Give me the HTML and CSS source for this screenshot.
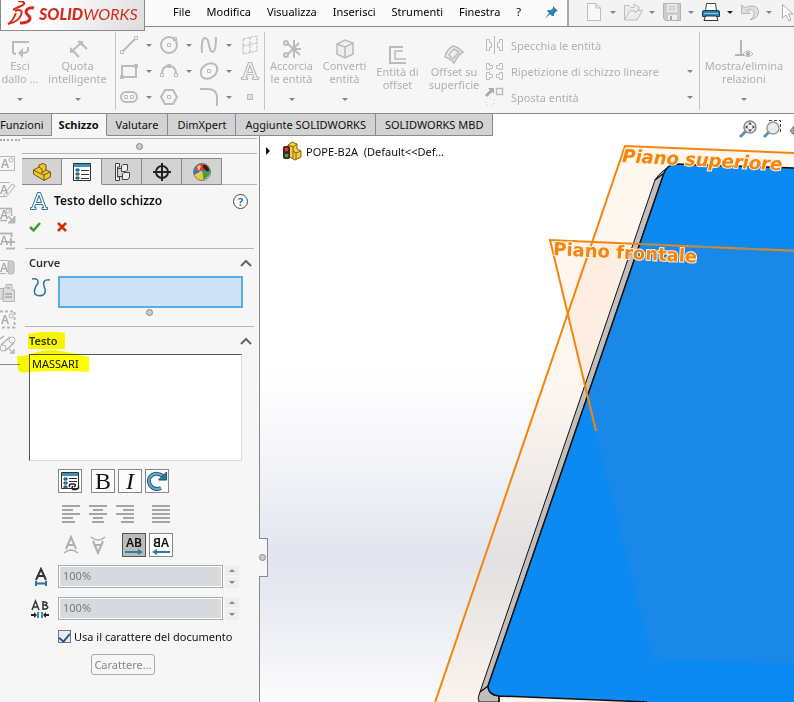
FILE: index.html
```html
<!DOCTYPE html>
<html lang="it">
<head>
    <meta charset="UTF-8">
    <meta name="viewport" content="width=device-width, initial-scale=1.0">
    <title>SOLIDWORKS - POPE-B2A</title>
    <link rel="stylesheet" href="styles.css">
</head>
<body>

    <!-- Menu bar -->
    <header class="menubar">
        <div class="logo">
            <svg width="28" height="26" viewBox="0 0 28 26" fill="none" stroke="#d42b1e">
                <path d="M11 0C15 0 18 1 17 3C16 5 10 6 6 9" stroke-width="2"/>
                <path d="M8 10C13 8 16 9 14 14C12 19 6 22 1 23C5 21 7 17 9 12" stroke-width="2"/>
                <path d="M27 7C23 6 19 8 19 11C19 14 24 15 23 18C22 21 17 22 13 22" stroke-width="3"/>
            </svg>
            <span><b>SOLID</b>WORKS</span>
        </div>
        <nav class="menus">
            <button>File</button>
            <button>Modifica</button>
            <button>Visualizza</button>
            <button>Inserisci</button>
            <button>Strumenti</button>
            <button>Finestra</button>
            <button>?</button>
            <button class="pin" aria-label="Blocca menu">
                <svg width="14" height="14" viewBox="0 0 14 14"><path d="M8 1L13 6L11 6.500L9 9L9 11L7 11L5 9L1 13L0.500 13L4 8L2 6L3 5L6 5L8 3Z" fill="#2b83b0"/></svg>
            </button>
        </nav>
        <div class="quickbar">
            <button class="quick" aria-label="Nuovo">
                <svg width="20" height="20" viewBox="0 0 20 20"><path d="M3.500 1.500H12L16.500 6V18.500H3.500ZM12 1.500V6H16.500" fill="#f8f8f8" stroke="#bdbdbd"/></svg>
                <i class="caret"></i>
            </button>
            <button class="quick" aria-label="Apri">
                <svg width="20" height="20" viewBox="0 0 20 20"><path d="M1.500 18V3.500H6L8 5.500H11V2L17 6L12 11V9H7L1.500 18H14L19.500 8.500H15" fill="#ececec" stroke="#bdbdbd"/></svg>
                <i class="caret"></i>
            </button>
            <button class="quick" aria-label="Salva">
                <svg width="20" height="20" viewBox="0 0 20 20"><path d="M1.500 1.500H18.500V18.500H3.500L1.500 16.500Z" fill="#ccc" stroke="#b2b2b2"/><path d="M5 2H15V10H5Z" fill="#f4f4f4"/><path d="M6 4H14M6 6H14M6 8H14" stroke="#bbb"/><path d="M6 13H15V18H6Z" fill="#eee"/><path d="M8 14H10V18H8Z" fill="#aaa"/></svg>
                <i class="caret"></i>
            </button>
            <button class="quick on" aria-label="Stampa">
                <svg width="20" height="20" viewBox="0 0 20 20"><path d="M5.500 1.500H14.500L15.500 9H4.500Z" fill="#fff" stroke="#444"/><path d="M1.500 10Q1.500 8.500 3 8.500H17Q18.500 8.500 18.500 10V14.500H1.500Z" fill="#2b83b0" stroke="#153f56"/><path d="M3 11.500H17" stroke="#8cc8e2"/><path d="M4.500 14H15.500L17 18.500H3Z" fill="#fff" stroke="#333"/></svg>
                <i class="caret"></i>
            </button>
            <button class="quick" aria-label="Annulla">
                <svg width="20" height="20" viewBox="0 0 20 20"><path d="M1.500 3V11.500H10L7 8.500Q14 6 14 12Q14 15 10 18Q19 16 18.500 9Q17 1 4.500 5.500Z" fill="#dedede" stroke="#b8b8b8"/></svg>
                <i class="caret"></i>
            </button>
            <button class="quick" aria-label="Seleziona">
                <svg width="20" height="20" viewBox="0 0 20 20"><path d="M3.500 2.500V16L7 13L10 19L12 18L9.500 12H14Z" fill="#fff" stroke="#aaa"/></svg>
            </button>
        </div>
    </header>

    <!-- Sketch ribbon -->
    <section class="ribbon">
        <div class="group line">
            <button class="cmd narrow">
                <svg width="20" height="20" viewBox="0 0 20 20" fill="none" stroke="#bbb" stroke-width="2"><path d="M19 3H3V13Q3 15 6 15"/><path d="M18 8V11Q18 14 12 14"/><path d="M13 9L8 14L13 19Z" fill="#bbb" stroke="none"/></svg>
                <span>Esci<br>dallo ...</span>
                <i class="caret"></i>
            </button>
            <button class="cmd wide">
                <svg width="20" height="20" viewBox="0 0 20 20" fill="none" stroke="#bbb" stroke-width="2"><path d="M11 18L3 10M19 10L11 2M4 12L13 4"/><path d="M2 14V8L8 13ZM9 2H15V8Z" fill="#bbb" stroke="none"/></svg>
                <span>Quota<br>intelligente</span>
                <i class="caret"></i>
            </button>
        </div>

        <div class="sketch-tools">
            <button aria-label="Linea"><svg width="20" height="20" viewBox="0 0 20 20"><path d="M4 16L16 4" stroke-width="2"/><path d="M1.500 15.500h3v3h-3zM15.500 1.500h3v3h-3z"/></svg><i class="caret"></i></button>
            <button aria-label="Cerchio"><svg width="20" height="20" viewBox="0 0 20 20"><circle cx="10" cy="10" r="8" stroke-width="2"/><path d="M8.500 8.500h3v3h-3zM14.500 2.500h3v3h-3z"/></svg><i class="caret"></i></button>
            <button aria-label="Spline"><svg width="20" height="20" viewBox="0 0 20 20"><path d="M3 18Q2 3 6 3Q9 3 10 10Q11 17 14 17Q17 16 17 2" stroke-width="2"/></svg><i class="caret"></i></button>
            <button aria-label="Piano"><svg width="20" height="20" viewBox="0 0 20 20"><path d="M3 4L17 1V16L3 19ZM10 2V18M3 11L17 8" stroke-dasharray="3 1"/></svg></button>
            <button aria-label="Rettangolo"><svg width="20" height="20" viewBox="0 0 20 20"><path d="M3 5H17V16H3Z" stroke-width="2"/><path d="M1.500 14.500h3v3h-3zM15.500 3.500h3v3h-3z"/></svg><i class="caret"></i></button>
            <button aria-label="Arco"><svg width="20" height="20" viewBox="0 0 20 20"><path d="M3 13Q3 5 10 5Q17 5 17 13" stroke-width="2"/><path d="M1.500 12.500h3v3h-3zM15.500 12.500h3v3h-3zM8.500 3.500h3v3h-3z"/></svg><i class="caret"></i></button>
            <button aria-label="Ellisse"><svg width="20" height="20" viewBox="0 0 20 20"><ellipse cx="10" cy="10" rx="9" ry="7" transform="rotate(-38 10 10)" stroke-width="2"/><path d="M8.500 8.500h3v3h-3z"/></svg><i class="caret"></i></button>
            <button aria-label="Testo"><svg width="20" height="20" viewBox="0 0 20 20"><path d="M1.500 18.500V16.500H3L8.500 1.500H11.500L17 16.500H18.500V18.500H12.500V16.500H14L13 13.500H7L6 16.500H7.500V18.500ZM7.500 11.500L10 4.500L12.500 11.500Z" stroke-width="1.200"/></svg></button>
            <button aria-label="Asola"><svg width="20" height="20" viewBox="0 0 20 20"><rect x="2" y="5" width="16" height="10" rx="5" stroke-width="2"/><path d="M5.500 8.500h3v3h-3zM11.500 8.500h3v3h-3z"/></svg><i class="caret"></i></button>
            <button aria-label="Poligono"><svg width="20" height="20" viewBox="0 0 20 20"><path d="M6 3H14L18 10L14 17H6L2 10Z" stroke-width="2"/><path d="M8.500 8.500h3v3h-3z"/></svg></button>
            <button aria-label="Raccordo"><svg width="20" height="20" viewBox="0 0 20 20"><path d="M1 2H9Q18 2 18 11V19" stroke-width="2"/></svg><i class="caret"></i></button>
            <button aria-label="Punto"><svg width="20" height="20" viewBox="0 0 20 20"><path d="M7.500 7.500h5v5h-5z" fill="#ddd"/></svg></button>
        </div>

        <div class="group">
            <button class="cmd">
                <svg width="20" height="20" viewBox="0 0 20 20" fill="none" stroke="#bbb" stroke-width="2"><circle cx="4" cy="4" r="2"/><circle cx="4" cy="16" r="2"/><path d="M6 5L18 16M6 15L17 4M12 1V19M9 10H19"/></svg>
                <span>Accorcia<br>le entità</span>
                <i class="caret"></i>
            </button>
            <button class="cmd">
                <svg width="20" height="20" viewBox="0 0 20 20" fill="#eee" stroke="#bbb" stroke-width="1.500"><path d="M2 5L10 1L18 4V15L10 19L2 15ZM2 5L10 8L18 4M10 8V19"/></svg>
                <span>Converti<br>entità</span>
                <i class="caret"></i>
            </button>
            <button class="cmd low">
                <svg width="20" height="20" viewBox="0 0 20 20" fill="none" stroke="#bbb"><path d="M15 2H2V18H18" stroke-width="2"/><path d="M15 6H7V14H18" stroke-width="1.500"/></svg>
                <span>Entità di<br>offset</span>
            </button>
            <button class="cmd offset low">
                <svg width="20" height="20" viewBox="0 0 20 20" fill="#eee" stroke="#bbb" stroke-width="1.500"><path d="M1 12Q3 4 9 1Q14 2 19 7Q14 10 10 18Q6 13 1 12Z"/><path d="M5 10Q7 6 10 4L15 7L9 14Z"/></svg>
                <span>Offset su<br>superficie</span>
            </button>
        </div>

        <div class="entity-list">
            <button><svg width="20" height="20" viewBox="0 0 20 20"><path d="M10.500 1V19M2.500 4.500H5.500V7.500H7.500V12.500H5.500V15.500H2.500ZM18.500 4.500H15.500V7.500H13.500V12.500H15.500V15.500H18.500Z"/></svg><span>Specchia le entità</span></button>
            <button><svg width="20" height="20" viewBox="0 0 20 20"><path d="M2.500 2.500H5.500V4.500H8.500V7.500H5.500V8.500H2.500ZM18.500 2.500H15.500V4.500H12.500V7.500H15.500V8.500H18.500ZM2.500 11.500H5.500V13.500H8.500V16.500H5.500V18.500H2.500ZM18.500 11.500H15.500V13.500H12.500V16.500H15.500V18.500H18.500Z"/></svg><span>Ripetizione di schizzo lineare</span><i class="caret"></i></button>
            <button><svg width="20" height="20" viewBox="0 0 20 20"><path d="M2 9L8 3" stroke="#aaa" stroke-width="3"/><path d="M4 1H10V7Z" fill="#aaa" stroke="none"/><path d="M12.500 1.500h6v6h-6z" stroke-width="1.500"/><path d="M2 12h8v6H2z" stroke-dasharray="1 3" stroke="#ccc"/></svg><span>Sposta entità</span><i class="caret"></i></button>
        </div>

        <div class="group">
            <button class="cmd relations">
                <svg width="20" height="20" viewBox="0 0 20 20" fill="none" stroke="#b5b5b5" stroke-width="2"><path d="M7 1V15M1 16H10"/><path d="M9 15Q14 9 19 15Q14 20 9 15Z" stroke-width="1"/><circle cx="14" cy="15" r="2" fill="#aaa" stroke="none"/></svg>
                <span>Mostra/elimina<br>relazioni</span>
                <i class="caret"></i>
            </button>
        </div>
    </section>

    <!-- Command tabs -->
    <div class="tabrow">
        <nav class="tabs">
            <button>Funzioni</button>
            <button class="active">Schizzo</button>
            <button>Valutare</button>
            <button>DimXpert</button>
            <button>Aggiunte SOLIDWORKS</button>
            <button>SOLIDWORKS MBD</button>
        </nav>
        <div class="headsup">
            <svg width="18" height="20" viewBox="0 0 18 20"><path d="M1 18L7 12" stroke="#5b93b5" stroke-width="3"/><circle cx="11" cy="8" r="6" fill="#eee" stroke="#888" stroke-width="1.500"/><path d="M11 3L13 5.500H9ZM11 13L9 10.500H13ZM6 8L8.500 6V10ZM16 8L13.500 6V10Z" fill="#444"/></svg>
            <svg width="20" height="20" viewBox="0 0 20 20"><path d="M6 1.500H17.500V14" fill="none" stroke="#444" stroke-dasharray="3 2"/><path d="M1 18L6 13" stroke="#5b93b5" stroke-width="3"/><circle cx="10" cy="9" r="6" fill="#e5eaee" stroke="#999" stroke-width="1.500"/></svg>
            <svg width="5" height="20" viewBox="0 0 5 20"><path d="M5 7L1 12L5 16Z" fill="#aaa" stroke="#777"/></svg>
        </div>
    </div>

    <main class="workspace">
        <!-- Annotation strip -->
        <aside class="strip">
            <svg width="17" height="22" viewBox="0 0 17 22"><path d="M0 4.500H14.500V18.500H0"/><text x="1" y="16">A</text><circle cx="11" cy="8" r="2"/></svg>
            <svg width="17" height="22" viewBox="0 0 17 22"><path d="M0 4.500H10M0 18.500H4M4 17L12 6L15 8L7 18L4 19Z"/><text x="0" y="16">A</text></svg>
            <svg width="17" height="22" viewBox="0 0 17 22"><path d="M0 4.500H11.500V12M0 16.500H7M8 12L14 18" stroke-width="1.500"/><path d="M15 12V19H8Z" fill="#bbb"/><text x="0" y="15">A</text><circle cx="8" cy="7" r="2"/></svg>
            <svg width="17" height="22" viewBox="0 0 17 22"><path d="M0 3.500H11.500V7M7 12H15M11 8V16M6 18.500H15" stroke-width="2"/><text x="0" y="15">A</text></svg>
            <svg width="17" height="22" viewBox="0 0 17 22"><path d="M0 4.500H9M0 17.500H6"/><rect x="8" y="5" width="6" height="13" rx="2" fill="#ccc"/><text x="0" y="16">A</text></svg>
            <svg width="17" height="22" viewBox="0 0 17 22"><path d="M0 6.500H3V17H0M3.500 12V6H6V2.500H12V8H14.500V19.500H3Z" fill="#ddd"/><path d="M5 12H12M5 15H12M7 6H10" stroke-width="2"/></svg>
            <svg width="17" height="22" viewBox="0 0 17 22"><path d="M0 3.500H14.500V19.500H0" stroke-dasharray="3 2" stroke-width="2"/><text x="1" y="16">A</text><circle cx="11" cy="8" r="2"/></svg>
            <svg width="17" height="22" viewBox="0 0 17 22"><circle cx="3" cy="14" r="3"/><circle cx="12" cy="6" r="3"/><path d="M1 11L10 3M5 17L14 9M0 5L4 2M9 15L14 19M14 15V19H10" stroke-width="1.500"/></svg>
        </aside>

        <!-- Property manager -->
        <section class="panel">
            <div class="grip"><i class="dot"></i></div>
            <nav class="panel-tabs">
                <button aria-label="FeatureManager"><svg width="20" height="20" viewBox="0 0 20 20"><path d="M1.500 8L7 5V3L11 1.500L14 3V8L18.500 10V15L12 18.500L1.500 12Z" fill="#f5c52c" stroke="#6e5312"/><path d="M1.500 8L7 11L12 13V18M7 5L10 7V11L14 8M12 13L18 10" fill="none" stroke="#6e5312"/></svg></button>
                <button class="active" aria-label="PropertyManager"><svg width="20" height="20" viewBox="0 0 20 20"><path d="M1.500 1.500H18.500V18.500H1.500Z" fill="#fff" stroke="#333"/><path d="M2 2H18V5H2Z" fill="#3b8fb8"/><path d="M4 7h3v2H4zM4 11h3v2H4zM4 15h3v2H4z" fill="#3b8fb8" stroke="#1c566f"/><path d="M9 8.500H17M9 12.500H17M9 16.500H17" stroke="#333"/></svg></button>
                <button aria-label="ConfigurationManager"><svg width="20" height="20" viewBox="0 0 20 20" fill="#eee" stroke="#444"><path d="M3.500 1.500H7.500V5H5.500V15H7.500V18.500H3.500ZM6 6.500H10M6 14.500H10" /><path d="M9.500 4L11 2.500H15.500V8L14 9.500H9.500ZM10.500 12L12 10.500H17.500V15L16 17.500H10.500Z"/></svg></button>
                <button aria-label="DimXpertManager"><svg width="20" height="20" viewBox="0 0 20 20" fill="none" stroke="#222" stroke-width="2"><circle cx="10" cy="10" r="6"/><path d="M10 1V19M1 10H19"/></svg></button>
                <button aria-label="DisplayManager"><svg width="20" height="20" viewBox="0 0 20 20"><circle cx="10" cy="10" r="8.500" fill="#f4f4ee"/><path d="M10 9L2 7Q5 1 11 1.500Q17 2 18 9Z" fill="#e23a24"/><path d="M10 9L18 7Q20 14 11 18Z" fill="#4b9b46"/><path d="M10 10L11 18Q5 19 2 13Z" fill="#f4c92c"/><path d="M10 9L2 13Q1 10 2 7Z" fill="#3377b7"/><ellipse cx="14" cy="6" rx="2" ry="4" transform="rotate(-40 14 6)" fill="#302020"/><path d="M5 5Q7 2 9 4L7 9Z" fill="#fff" fill-opacity=".7"/><circle cx="10" cy="10" r="8.500" fill="none" stroke="#777"/></svg></button>
            </nav>

            <div class="title">
                <svg width="18" height="20" viewBox="0 0 18 20" fill="none" stroke="#2d7396"><path d="M.5 18.500V16.500H2L7.500 1.500H10.500L16 16.500H17.500V18.500H12V16.500H13.500L12.500 13.500H5.500L4.500 16.500H6V18.500ZM6.500 11.500L9 4.500L11.500 11.500Z"/></svg>
                <h1>Testo dello schizzo</h1>
                <button class="help" aria-label="Guida">?</button>
            </div>
            <div class="confirm">
                <button aria-label="OK"><svg width="12" height="12" viewBox="0 0 12 12"><path d="M1 6L4.500 9.500L11 2" fill="none" stroke="#3fa02c" stroke-width="2.500"/></svg></button>
                <button aria-label="Annulla"><svg width="12" height="12" viewBox="0 0 12 12"><path d="M2 2L10 10M10 2L2 10" stroke="#d32d0b" stroke-width="2.500"/></svg></button>
            </div>

            <section class="block curves">
                <div class="block-head">
                    <h2>Curve</h2>
                    <svg width="12" height="8" viewBox="0 0 12 8"><path d="M1 7L6 2L11 7" fill="none" stroke="#666" stroke-width="2"/></svg>
                </div>
                <div class="curve-row">
                    <svg width="20" height="24" viewBox="0 0 20 24"><path d="M1 3Q8 2 7 7Q2 14 4 18Q7 21 12 19Q16 17 13 10Q11 3 19 4" fill="none" stroke="#2d7396" stroke-width="1.500"/></svg>
                    <input type="text" class="selection" aria-label="Curve" readonly>
                </div>
                <i class="dot"></i>
            </section>

            <section class="block text-block">
                <div class="block-head">
                    <h2><label for="sketch-text">Testo</label></h2>
                    <svg width="12" height="8" viewBox="0 0 12 8"><path d="M1 7L6 2L11 7" fill="none" stroke="#666" stroke-width="2"/></svg>
                </div>
                <textarea id="sketch-text" spellcheck="false">MASSARI</textarea>
                <!-- highlighter strokes -->
                <svg class="marker" width="76" height="46" viewBox="0 0 76 46"><path d="M11 4Q30 0 48 3V19H11ZM0 26Q12 26 20 22Q34 18 50 22L72 27V42Q40 40 12 42Q4 44 1 40Z" fill="#ffff00"/></svg>

                <div class="tools format">
                    <button class="boxed link" aria-label="Collega a proprietà"><svg width="20" height="20" viewBox="0 0 20 20"><path d="M1.500 1.500H18.500V17.500H1.500Z" fill="#fff" stroke="#333"/><path d="M2 2H18V5H2Z" fill="#3b8fb8"/><path d="M4 7h3v2H4zM4 11h3v2H4zM4 15h3v2H4z" fill="#3b8fb8" stroke="#1c566f"/><path d="M9 7.500H17M9 10.500H17" stroke="#333"/><path d="M10 16Q8 14 11 13H14Q17 14 14 16M13 15Q11 17 13 18.500H16Q20 17 18 15" fill="none" stroke="#222" stroke-width="1.500"/></svg></button>
                    <button class="boxed serif">B</button>
                    <button class="boxed serif italic">I</button>
                    <button class="boxed" aria-label="Ruota"><svg width="22" height="22" viewBox="0 0 22 22"><path d="M15 18Q8 21 4 15Q1 9 6 5Q11 2 17 6" fill="none" stroke="#245a76" stroke-width="4"/><path d="M15 18Q8 21 4 15Q1 9 6 5Q11 2 17 6" fill="none" stroke="#62abd0" stroke-width="2"/><path d="M20.500 2V10H12.500Z" fill="#2d7ea6" stroke="#1c566f"/></svg></button>
                </div>
                <div class="tools align">
                    <button aria-label="Allinea a sinistra"><svg width="18" height="18" viewBox="0 0 18 18"><path d="M0 1H18M0 5H11M0 9H18M0 13H11M0 17H13"/></svg></button>
                    <button aria-label="Centra"><svg width="18" height="18" viewBox="0 0 18 18"><path d="M0 1H18M4 5H14M0 9H18M4 13H14M3 17H15"/></svg></button>
                    <button aria-label="Allinea a destra"><svg width="18" height="18" viewBox="0 0 18 18"><path d="M0 1H18M7 5H18M0 9H18M7 13H18M5 17H18"/></svg></button>
                    <button class="justify" aria-label="Giustifica"><svg width="18" height="18" viewBox="0 0 18 18"><path d="M0 1H18M0 5H18M0 9H18M0 13H18M0 17H18"/></svg></button>
                </div>
                <div class="tools flip">
                    <button aria-label="Capovolgi sopra"><svg width="18" height="20" viewBox="0 0 18 20"><path d="M4 14L9 2L14 14M6 10H12" stroke-width="2"/><path d="M2 18Q9 12 16 18" stroke-width="1.500"/></svg></button>
                    <button aria-label="Capovolgi sotto"><svg width="18" height="20" viewBox="0 0 18 20"><path d="M4 6L9 18L14 6M6 10H12" stroke-width="2"/><path d="M2 2Q9 8 16 2" stroke-width="1.500"/></svg></button>
                    <button class="boxed pressed"><span>AB</span><svg width="18" height="6" viewBox="0 0 18 6"><path d="M0 2H13V0L18 3L13 6V4H0Z"/></svg></button>
                    <button class="boxed"><span class="mirror">AB</span><svg width="18" height="6" viewBox="0 0 18 6"><path d="M18 2H5V0L0 3L5 6V4H18Z"/></svg></button>
                </div>

                <div class="spin">
                    <svg width="20" height="20" viewBox="0 0 20 20"><path d="M6 13L11 2L16 13M8 9H14" fill="none" stroke="#333" stroke-width="2"/><path d="M6 14V19M16 14V19M7 16.500H15" stroke="#2d7396" stroke-width="2"/></svg>
                    <input type="text" value="100%" aria-label="Fattore larghezza" disabled>
                    <div class="steps"><button aria-label="Aumenta"><i class="caret up"></i></button><button aria-label="Diminuisci"><i class="caret"></i></button></div>
                </div>
                <div class="spin">
                    <svg width="20" height="20" viewBox="0 0 20 20"><path d="M2 11L5.500 2L9 11M3 8H8M13 2V11M13 3H15Q19 4 15 6H13M15 6Q20 8 16 10H13" fill="none" stroke="#333" stroke-width="1.500"/><path d="M8 13V19M12 13V19" stroke="#3b8fb8" stroke-width="2"/><path d="M1 16H6M14 16H19" stroke="#222" stroke-width="2"/><path d="M4 13L7 16L4 19ZM16 13L13 16L16 19Z" fill="#222"/></svg>
                    <input type="text" value="100%" aria-label="Spaziatura" disabled>
                    <div class="steps"><button aria-label="Aumenta"><i class="caret up"></i></button><button aria-label="Diminuisci"><i class="caret"></i></button></div>
                </div>

                <label class="check"><input type="checkbox" checked> Usa il carattere del documento</label>
                <button class="font-button" disabled>Carattere...</button>
            </section>
        </section>

        <!-- Graphics area -->
        <section class="viewport">
            <svg class="scene" width="100%" height="100%">
                <defs>
                    <linearGradient id="plane" x1="0" y1="0" x2="0" y2="566" gradientUnits="userSpaceOnUse">
                        <stop offset="0" stop-color="#fff8f0"/>
                        <stop offset="0.450" stop-color="#fdf6f0"/>
                        <stop offset="0.750" stop-color="#e2e0e1"/>
                        <stop offset="1" stop-color="#fbf4ed"/>
                    </linearGradient>
                </defs>
                <path d="M365 10L1565 60V1000H27Z" fill="url(#plane)"/>
                <path d="M290 104L534 115L336 295Z" fill="#ff9040" fill-opacity=".08"/>
                <path d="M395 44Q401 34 415 28L404 37L228 550L239 560V566H219Q217 562 220 556Z" fill="#c3bebb" stroke="#111"/>
                <path d="M404 37Q407 29 415 28L1565 66V620L387 566L239 560Q228 559 228 550Z" fill="#0d89f2"/>
                <path d="M380 108L1565 160V574L534 528L393 522L336 295L326 264Z" fill="#1a88e6"/>
                <path d="M1565 66L415 28Q407 29 404 37L228 550Q228 559 239 560L387 566M220 556L228 550M239 560V566M395 44L404 37" fill="none" stroke="#111" stroke-width="1.500"/>
                <g fill="none" stroke="#f5840c" stroke-width="2">
                    <path d="M1565 60L365 10L27 1000"/>
                    <path d="M1565 160L290 104L336 295"/>
                    <path d="M380 108L534 115" stroke="#a08f60" stroke-dasharray="26 22"/>
                </g>
                <text class="plane-name italic" x="362" y="26" transform="rotate(3 362 26)">Piano superiore</text>
                <text class="plane-name" x="293" y="119" transform="rotate(3 293 119)">Piano frontale</text>
            </svg>
            <div class="tree">
                <i class="expand"></i>
                <svg width="20" height="20" viewBox="0 0 20 20"><path d="M6 4L10 1L15 3V8L19 10V16L13 19L6 15Z" fill="#f5cf3a" stroke="#7d6114"/><path d="M6 4L11 6L15 3M11 6V17M11 10L14 12L19 10M14 12V18" fill="none" stroke="#7d6114"/><rect x="1" y="5" width="7" height="13" rx="2" fill="#3a2522"/><circle cx="4.500" cy="8.500" r="2" fill="#e3382c"/><circle cx="4.500" cy="14.500" r="2" fill="#36a344"/></svg>
                <span>POPE-B2A&nbsp; (Default&lt;&lt;Def...</span>
            </div>
            <button class="splitter" aria-label="Comprimi pannello"><i class="dot"></i></button>
        </section>
    </main>

</body>
</html>
```

FILE: styles.css
```css
:root {
    --bg: #f6f6f6;
    --tab: #d3d3d3;
    --line: #8a8a8a;
    --line-soft: #b4b4b4;
    --muted: #b0b0b0;
    --text: #111;
}

* {
    margin: 0;
    padding: 0;
    box-sizing: border-box;
}

body {
    display: flex;
    flex-direction: column;
    min-height: 100vh;
    font-family: "Noto Sans", "Open Sans", sans-serif;
    font-size: 11px;
    color: var(--text);
    background: #fff;
    overflow: hidden;
}

button {
    flex: none;
    font: inherit;
    color: inherit;
    background: none;
    border: none;
}

svg {
    display: block;
    flex: none;
}

/* Small shared marks */
.caret {
    border: 3px solid transparent;
    border-top-color: #858585;
    border-bottom: none;
}

.caret.up {
    border-top: none;
    border-bottom: 3px solid #858585;
}

.dot {
    width: 7px;
    height: 7px;
    border: 1px solid #888;
    border-radius: 50%;
    background: #ccc;
}

/* Menu bar */
.menubar {
    position: relative;
    display: flex;
    height: 27px;
    background: #fafafa;
    border-bottom: 1px solid var(--line);
}

.logo {
    position: absolute;
    top: 0;
    left: 0;
    z-index: 2;
    display: flex;
    align-items: center;
    gap: 4px;
    width: 145px;
    height: 31px;
    padding: 0 0 3px 6px;
    border: 1px solid var(--line);
    border-top: none;
    background: linear-gradient(120deg, #fff 30%, #ddd);
    font-family: Lato, sans-serif;
    font-size: 16px;
    font-style: italic;
    color: #d42b1e;
}

.logo b {
    font-weight: 900;
}

.menus {
    display: flex;
    align-items: center;
    flex: none;
    gap: 16px;
    width: 569px;
    padding: 0 0 3px 173px;
    border-right: 2px solid #aaa;
    color: #000;
}

.menus .pin {
    margin-left: 8px;
}

.quickbar {
    display: flex;
    flex: 1;
    align-items: center;
    padding-left: 15px;
    overflow: hidden;
    background: #f3f3f3;
}

.quick {
    display: flex;
    align-items: center;
    gap: 6px;
    width: 39px;
    padding-bottom: 2px;
}

.quick.on .caret {
    border-top-color: #222;
}

/* Ribbon */
.ribbon {
    display: flex;
    height: 87px;
    padding: 5px 0 3px;
    overflow: hidden;
    background: var(--bg);
    border-bottom: 1px solid var(--line);
    color: var(--muted);
}

.group {
    display: flex;
    flex: none;
}

.group.line {
    border-right: 1px solid #c4c4c4;
}

.cmd {
    display: flex;
    flex-direction: column;
    align-items: center;
    width: 53px;
    padding-top: 7px;
    line-height: 13px;
    white-space: nowrap;
}

.cmd .caret {
    margin-top: 13px;
}

.cmd.narrow {
    width: 40px;
}

.cmd.wide {
    width: 75px;
}

.cmd.low {
    padding-top: 13px;
}

.cmd.offset {
    width: 60px;
}

.cmd.relations {
    width: 88px;
}

.sketch-tools {
    display: grid;
    grid-template-columns: 40px 40px 41px 24px;
    grid-template-rows: repeat(3, 26px);
    flex: none;
    width: 149px;
    padding-left: 3px;
    border-right: 1px solid #c4c4c4;
}

.sketch-tools button {
    display: flex;
    align-items: center;
    gap: 7px;
}

.sketch-tools svg,
.entity-list svg {
    fill: none;
    stroke: #bbb;
}

.entity-list {
    display: flex;
    flex-direction: column;
    flex: none;
    width: 216px;
    padding: 0 6px 0 0;
    border-right: 1px solid #c4c4c4;
}

.entity-list button {
    display: flex;
    align-items: center;
    gap: 7px;
    height: 26px;
}

.entity-list .caret {
    margin-left: auto;
}

/* Command tabs */
.tabrow {
    position: relative;
    z-index: 1;
    display: flex;
    justify-content: space-between;
    height: 22px;
}

.tabs {
    display: flex;
}

.tabs button {
    padding: 0 9px;
    border-right: 1px solid var(--line);
    border-bottom: 1px solid var(--line);
    background: var(--tab);
    white-space: nowrap;
}

.tabs button:first-child {
    padding: 0 7px 0 0;
}

.tabs .active {
    padding: 0 7px;
    border-bottom-color: var(--bg);
    background: var(--bg);
    font-weight: 700;
}

.headsup {
    display: flex;
    gap: 6px;
    padding-top: 5px;
}

/* Workspace */
.workspace {
    display: flex;
    flex: 1;
    background: var(--bg);
}

.strip {
    display: flex;
    flex-direction: column;
    flex: none;
    gap: 4px;
    width: 20px;
    height: 226px;
    margin: 3px 2px 0 0;
    padding-top: 11px;
    border-top: 2px dotted #aaa;
    border-bottom: 1px solid var(--line);
}

.strip svg {
    fill: none;
    stroke: #b5b5b5;
}

.strip text {
    fill: #aaa;
    stroke: none;
    font-size: 12px;
    font-weight: 600;
}

/* Property manager */
.panel {
    flex: none;
    width: 238px;
    padding: 2px 2px 0 0;
    border-right: 1px solid var(--line);
}

.grip {
    display: flex;
    justify-content: center;
    align-items: center;
    height: 16px;
    border-top: 1px solid var(--line-soft);
    border-bottom: 1px solid var(--line-soft);
}

.panel-tabs {
    display: flex;
    margin-top: 4px;
    height: 27px;
    border-bottom: 1px solid var(--line-soft);
}

.panel-tabs button {
    display: flex;
    justify-content: center;
    align-items: center;
    width: 40px;
    height: 27px;
    border: 1px solid var(--line);
    border-left: none;
    background: var(--tab);
}

.panel-tabs .active {
    border-bottom-color: var(--bg);
    background: var(--bg);
}

.title {
    display: flex;
    align-items: center;
    gap: 6px;
    padding: 6px 9px 0 8px;
}

.title h1 {
    font-size: 12px;
    font-weight: 600;
    line-height: 20px;
}

.help {
    width: 15px;
    height: 15px;
    margin-left: auto;
    border: 1px solid #444;
    border-radius: 50%;
    background: #fff;
    color: #2d7396;
    font-weight: 700;
    line-height: 13px;
}

.confirm {
    display: flex;
    gap: 15px;
    height: 37px;
    padding: 10px 7px 0;
}

.confirm button {
    height: 12px;
}

.block {
    margin: 0 3px;
    border-top: 1px solid var(--line-soft);
}

.block-head {
    display: flex;
    align-items: center;
    justify-content: space-between;
    height: 27px;
    padding: 0 2px 0 4px;
}

.block-head h2 {
    font-size: 11px;
    font-weight: 600;
    color: #333;
}

.curves {
    height: 78px;
}

.curve-row {
    display: flex;
    gap: 7px;
    padding: 0 11px 0 6px;
}

.selection {
    flex: 1;
    min-width: 0;
    height: 32px;
    border: 2px solid #5aade2;
    background: #cde2f6;
    outline: none;
}

.curves .dot {
    display: block;
    margin: 1px auto 0 121px;
}

.text-block {
    position: relative;
}

textarea {
    display: block;
    width: 213px;
    height: 107px;
    margin-left: 4px;
    padding: 1px 2px;
    border: 1px solid #ddd;
    border-top-color: #555;
    border-left-color: #555;
    background: #fff;
    font: inherit;
    color: #111;
    resize: none;
}

.marker {
    position: absolute;
    top: 3px;
    left: -8px;
    mix-blend-mode: multiply;
    pointer-events: none;
}

.tools {
    display: flex;
    align-items: center;
    gap: 3px;
    padding-left: 33px;
}

.boxed {
    display: flex;
    flex-direction: column;
    justify-content: center;
    align-items: center;
    width: 24px;
    height: 24px;
    border: 1px solid #888;
    background: #fcfcfc;
}

.boxed.link {
    margin-right: 6px;
}

.serif {
    font-family: "Liberation Serif", serif;
    font-size: 24px;
    line-height: 22px;
}

.italic {
    font-style: italic;
}

.format {
    margin-top: 8px;
}

.align {
    gap: 9px;
    margin-top: 12px;
    padding-left: 37px;
    stroke: #a5a5a5;
    stroke-width: 2;
}

.align .justify {
    margin-left: 9px;
}

.flip {
    gap: 9px;
    margin-top: 10px;
    padding-left: 37px;
    fill: none;
    stroke: #b0b0b0;
}

.flip .boxed {
    margin-left: 6px;
    font-size: 12px;
    font-weight: 600;
    line-height: 13px;
    fill: #2d7ea6;
    stroke: none;
}

.flip .boxed + .boxed {
    margin-left: -6px;
}

.flip .pressed {
    background: #bbb;
    border-color: #555;
}

.mirror {
    transform: scaleX(-1);
}

.spin {
    display: flex;
    align-items: center;
    gap: 2px;
    margin-top: 8px;
    padding-left: 5px;
}

.spin svg {
    margin-right: 6px;
}

.spin input {
    width: 165px;
    height: 23px;
    padding: 0 4px 2px;
    border: 1px solid #aaa;
    outline: 1px solid #fff;
    outline-offset: -2px;
    background: #d6d9dd;
    font: inherit;
    color: #7c7c7c;
}

.spin + .spin {
    margin-top: 9px;
}

.steps {
    display: flex;
    flex-direction: column;
    gap: 1px;
}

.steps button {
    display: flex;
    justify-content: center;
    align-items: center;
    width: 14px;
    height: 11px;
    background: #eee;
}

.check {
    display: flex;
    align-items: center;
    gap: 3px;
    height: 15px;
    margin-top: 9px;
    padding-left: 33px;
    white-space: nowrap;
}

.check input {
    display: flex;
    justify-content: center;
    width: 13px;
    height: 13px;
    border: 1px solid #777;
    background: #e8edf4;
    appearance: none;
}

.check input:checked::after {
    content: "";
    width: 5px;
    height: 9px;
    border: solid #35509a;
    border-width: 0 2px 2px 0;
    transform: rotate(40deg);
}

.font-button {
    width: 64px;
    height: 21px;
    margin: 10px 0 20px 66px;
    border: 1px solid #aaa;
    border-radius: 3px;
    color: #8a8a8a;
}

/* Graphics area */
.viewport {
    position: relative;
    flex: 1;
    min-width: 0;
    background: linear-gradient(#fff 41%, #f3f4f8 58%, #e2e5ee 74%, #e8eaf1 82%, #fcfcfd);
}

.scene {
    position: absolute;
    inset: 0;
}

.plane-name {
    fill: #f5840c;
    stroke: #fff0df;
    stroke-width: 2px;
    paint-order: stroke;
    font-family: "DejaVu Sans", sans-serif;
    font-size: 18px;
    font-weight: 700;
}

.tree {
    position: relative;
    display: flex;
    align-items: center;
    gap: 4px;
    padding: 5px 6px 0;
}

.tree svg {
    margin-left: 8px;
}

.expand {
    border: 4px solid transparent;
    border-left-color: #111;
    border-right: none;
}

.splitter {
    position: absolute;
    top: 402px;
    left: -1px;
    display: flex;
    align-items: center;
    width: 9px;
    height: 39px;
    border: 1px solid var(--line);
    border-left: none;
    background: var(--bg);
}
```
